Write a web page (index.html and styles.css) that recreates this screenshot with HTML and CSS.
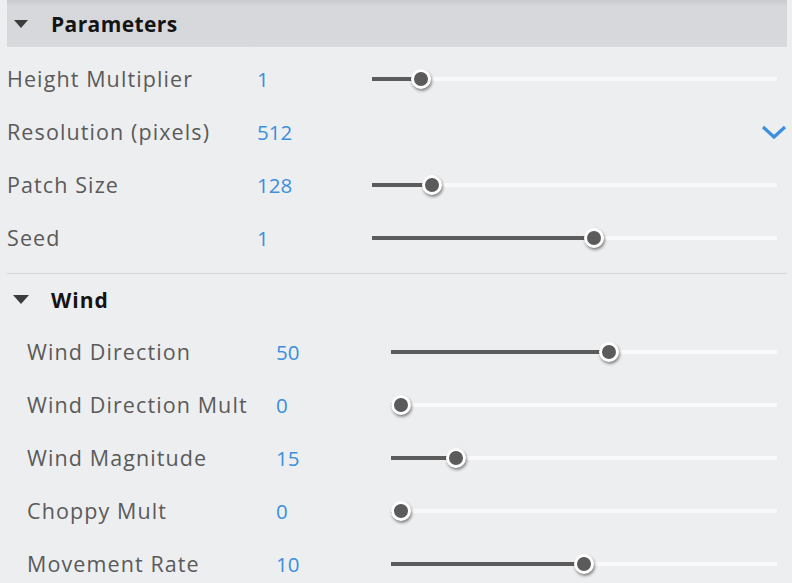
FILE: index.html
```html
<!DOCTYPE html>
<html>
<head>
<meta charset="utf-8">
<link rel="stylesheet" href="styles.css">
</head>
<body>
<div class="panel">
  <div class="header">
    <span class="tri"></span>
    <span class="title">Parameters</span>
  </div>
  <div class="rows">
    <div class="row">
      <span class="label">Height Multiplier</span>
      <span class="value">1</span>
      <div class="slider"><div class="track"><div class="fill" style="width:49px"></div><div class="thumb" style="left:49px"></div></div></div>
    </div>
    <div class="row">
      <span class="label">Resolution (pixels)</span>
      <span class="value">512</span>
      <div class="dropdown">
        <svg class="chev" width="26" height="16" viewBox="0 0 26 16"><path d="M2 3 L13 13 L24 3" fill="none" stroke="#3c8fdc" stroke-width="3.2"/></svg>
      </div>
    </div>
    <div class="row">
      <span class="label">Patch Size</span>
      <span class="value">128</span>
      <div class="slider"><div class="track"><div class="fill" style="width:60px"></div><div class="thumb" style="left:60px"></div></div></div>
    </div>
    <div class="row">
      <span class="label">Seed</span>
      <span class="value">1</span>
      <div class="slider"><div class="track"><div class="fill" style="width:222px"></div><div class="thumb" style="left:222px"></div></div></div>
    </div>
  </div>
  <div class="sep"></div>
  <div class="subheader">
    <span class="tri"></span>
    <span class="subtitle">Wind</span>
  </div>
  <div class="rows sub">
    <div class="row">
      <span class="label">Wind Direction</span>
      <span class="value">50</span>
      <div class="slider"><div class="track"><div class="fill" style="width:218px"></div><div class="thumb" style="left:218px"></div></div></div>
    </div>
    <div class="row">
      <span class="label">Wind Direction Mult</span>
      <span class="value">0</span>
      <div class="slider"><div class="track"><div class="fill" style="width:10px"></div><div class="thumb" style="left:10px"></div></div></div>
    </div>
    <div class="row">
      <span class="label">Wind Magnitude</span>
      <span class="value">15</span>
      <div class="slider"><div class="track"><div class="fill" style="width:65px"></div><div class="thumb" style="left:65px"></div></div></div>
    </div>
    <div class="row">
      <span class="label">Choppy Mult</span>
      <span class="value">0</span>
      <div class="slider"><div class="track"><div class="fill" style="width:10px"></div><div class="thumb" style="left:10px"></div></div></div>
    </div>
    <div class="row">
      <span class="label">Movement Rate</span>
      <span class="value">10</span>
      <div class="slider"><div class="track"><div class="fill" style="width:193px"></div><div class="thumb" style="left:193px"></div></div></div>
    </div>
  </div>
</div>
</body>
</html>
```

FILE: styles.css
```css
html, body {
  margin: 0;
  padding: 0;
  background: #edeef0;
  overflow: hidden;
}
body {
  width: 792px;
  height: 583px;
  font-family: "Open Sans", "Noto Sans", sans-serif;
}
.panel {
  padding: 0 5px 0 7px;
}
.header {
  height: 47px;
  background: linear-gradient(#c9cacd 0px, #d6d7da 6px, #d8d9dc 100%);
  display: flex;
  align-items: center;
}
.tri {
  width: 0;
  height: 0;
  border-left: 7px solid transparent;
  border-right: 7px solid transparent;
  border-top: 8px solid #3c3c3c;
  margin-left: 7px;
  margin-right: 23px;
}
.title {
  font-weight: 700;
  font-size: 21px;
  color: #141414;
  letter-spacing: 0.4px;
}
.rows {
  margin-top: 5px;
  display: flex;
  flex-direction: column;
}
.rows.sub {
  margin-top: 0;
  padding-left: 20px;
}
.row {
  height: 53px;
  display: flex;
  align-items: center;
}
.label {
  width: 250px;
  font-size: 21.5px;
  font-weight: 500;
  letter-spacing: 1.1px;
  color: #5a5a5a;
  white-space: nowrap;
}
.sub .label {
  width: 249px;
}
.value {
  width: 115px;
  font-size: 20.5px;
  color: #3c8fdc;
}
.slider {
  flex: 1;
  margin-right: 10px;
  display: flex;
  align-items: center;
}
.track {
  position: relative;
  width: 100%;
  height: 4px;
  background: #f9f9fb;
}
.fill {
  height: 4px;
  background: #5b5b5b;
}
.thumb {
  position: absolute;
  top: 50%;
  width: 14px;
  height: 14px;
  margin-left: -10px;
  margin-top: -10px;
  border: 3px solid #ffffff;
  border-radius: 50%;
  background: #5b5b5b;
  box-shadow: 1px 2px 3px rgba(0,0,0,0.45);
}
.dropdown {
  flex: 1;
  display: flex;
  justify-content: flex-end;
  margin-right: 0;
}
.sep {
  margin-top: 9px;
  height: 1px;
  background: #d6d7da;
}
.subheader {
  height: 51px;
  display: flex;
  align-items: center;
}
.subheader .tri {
  margin-left: 6px;
  margin-right: 22px;
  border-left-width: 8px;
  border-right-width: 8px;
  border-top-width: 9px;
}
.subtitle {
  font-weight: 700;
  font-size: 21px;
  letter-spacing: 1px;
  color: #141414;
}
```
